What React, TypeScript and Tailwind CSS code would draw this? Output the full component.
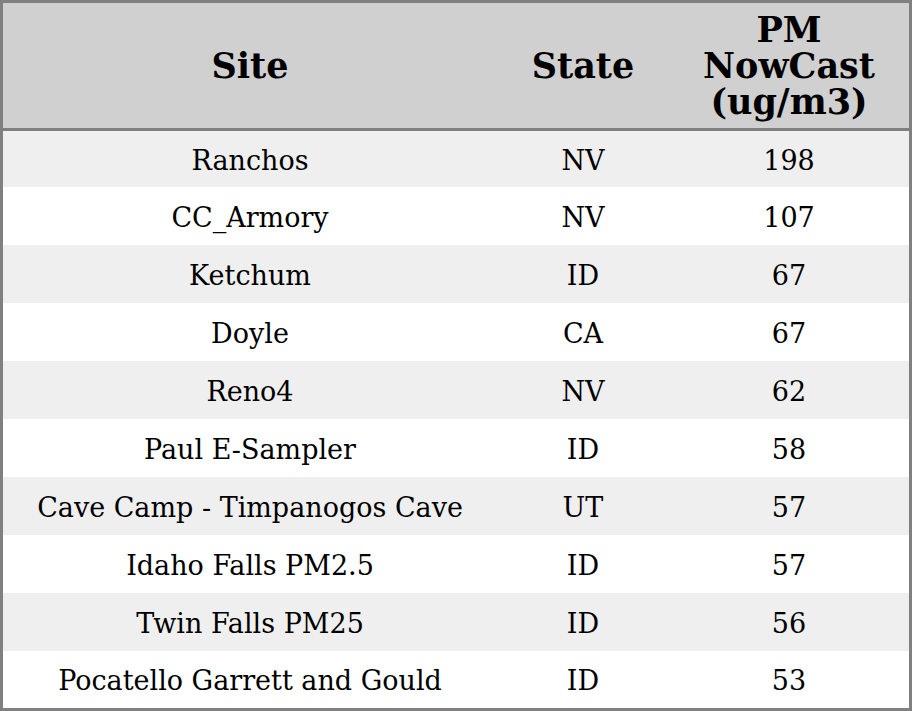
const rows = [
  { site: "Ranchos", state: "NV", pm: "198" },
  { site: "CC_Armory", state: "NV", pm: "107" },
  { site: "Ketchum", state: "ID", pm: "67" },
  { site: "Doyle", state: "CA", pm: "67" },
  { site: "Reno4", state: "NV", pm: "62" },
  { site: "Paul E-Sampler", state: "ID", pm: "58" },
  { site: "Cave Camp - Timpanogos Cave", state: "UT", pm: "57" },
  { site: "Idaho Falls PM2.5", state: "ID", pm: "57" },
  { site: "Twin Falls PM25", state: "ID", pm: "56" },
  { site: "Pocatello Garrett and Gould", state: "ID", pm: "53" },
];

export default function App() {
  return (
    <div className="h-[711px] w-[912px] bg-white font-['DejaVu_Serif',serif] text-black">
      <div className="border-[3px] border-[#808080]">
        <div className="grid h-[128px] grid-cols-[494px_172px_240px] items-center border-b-[3px] border-[#808080] bg-[#d0d0d0] text-center text-[35px] font-bold leading-[36px]">
          <div>Site</div>
          <div>State</div>
          <div>
            PM
            <br />
            NowCast
            <br />
            (ug/m3)
          </div>
        </div>
        {rows.map((row, i) => (
          <div
            key={row.site}
            className={
              "grid grid-cols-[494px_172px_240px] items-center pt-[4px] text-center text-[27px] " +
              (i === 0 ? "h-[56px] " : i === rows.length - 1 ? "h-[57px] " : "h-[58px] ") +
              (i % 2 === 0 ? "bg-[#efefef]" : "bg-white")
            }
          >
            <div>{row.site}</div>
            <div>{row.state}</div>
            <div>{row.pm}</div>
          </div>
        ))}
      </div>
    </div>
  );
}
